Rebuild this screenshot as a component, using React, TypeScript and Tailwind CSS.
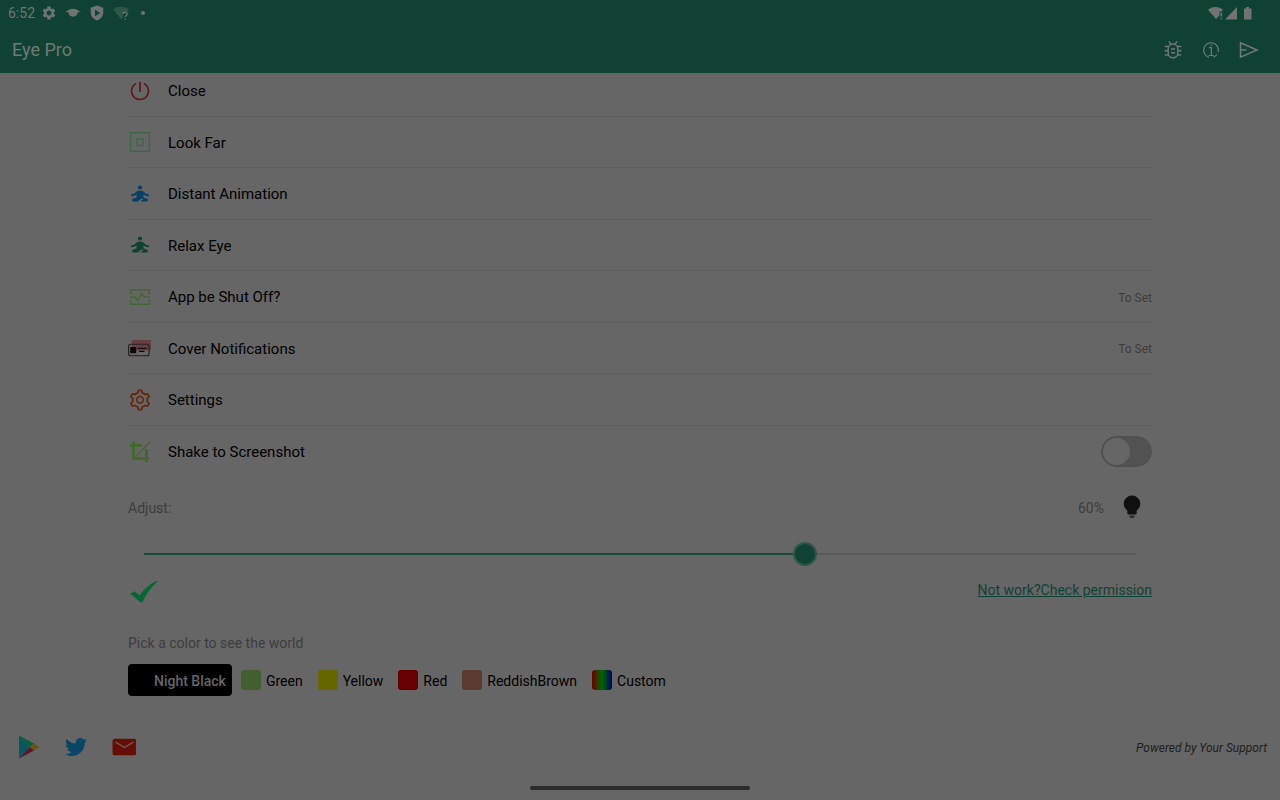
import { useState, type ReactNode } from "react";
import { AiOutlinePoweroff, AiOutlineSetting } from "react-icons/ai";
import { FaTwitter } from "react-icons/fa";
import { MdSettings } from "react-icons/md";

function StatusBar() {
  return (
    <div className="flex h-[26px] items-center justify-between pr-7 pl-2 text-[#6f7472]">
      <div className="flex items-center gap-2">
        <span className="text-sm">6:52</span>
        <MdSettings className="-ml-0.5 size-4" />
        <svg className="h-4 w-4" viewBox="0 0 16 16" fill="currentColor" aria-hidden="true">
          <path d="M0 7C3 5.500 4.500 3.700 8 3.700S13 5.500 16 7l-3.100.3C12.500 10 10.500 11.700 8 11.700S3.500 10 3.200 7.300z" />
        </svg>
        <svg className="h-4 w-4" viewBox="0 0 16 16" fill="currentColor" fillRule="evenodd" aria-hidden="true">
          <path d="M8 0.500l6.300 2.300v5C14.300 11.500 11.500 14.300 8 15.500 4.500 14.300 1.700 11.500 1.700 7.800v-5zM6 4.500v6.800l5.200-3.400z" />
        </svg>
        <svg className="h-4 w-4" viewBox="0 0 16 16" aria-hidden="true">
          <path d="M0 4.300C4.500 1 11.500 1 16 4.300L14 7c-2-.5-4 .8-4 3l-.2 3L8 14z" fill="#30564a" />
          <path d="M10.200 9c0-2.300 4-2.300 4-.1 0 1.500-2 1.500-2 3.200m0 1.400v1.200" fill="none" stroke="currentColor" strokeWidth="1.300" />
        </svg>
        <span className="ml-1 size-1 rounded-full bg-[#6f7472]" />
      </div>
      <svg className="h-4 w-11" viewBox="0 0 44 16" fill="currentColor" aria-hidden="true">
        <path d="M0 4.800C4.200 1.200 10.800 1.200 15 4.800L13.600 6.500H11.500v4L8 14z" />
        <path d="M12.500 7.500h1.500v4h-1.500zM12.500 12.700h1.500v1.500h-1.500zM29 2v12.500H17zM38 2h3v1.500h2.500v11h-7.500v-11H38z" />
      </svg>
    </div>
  );
}

function BugIcon() {
  return (
    <svg className="size-5" viewBox="0 0 20 20" fill="none" stroke="currentColor" strokeWidth="1.400" aria-hidden="true">
      <rect x="5.200" y="4" width="9.600" height="13.800" rx="4.800" />
      <path d="M5.800 1.500l2.300 2.600M14.200 1.500l-2.300 2.600M1.800 6.500h3.800M14.400 6.500h3.800M1.500 10.800h3.700M14.800 10.800h3.700M1.800 15h3.800M14.400 15h3.800M8 9h4M8 12.800h4" />
    </svg>
  );
}

function InfoIcon() {
  return (
    <svg className="size-5" viewBox="0 0 20 20" fill="none" stroke="currentColor" strokeWidth="1.200" aria-hidden="true">
      <path d="M8 17.300A7.400 7.400 0 1 1 17.200 12M15.800 14.500A7.400 7.400 0 0 1 12.300 17.200" />
      <path d="M8 7.700h2.400v7.600M7.600 15.500h5.200M9.500 5.200h1.500" />
    </svg>
  );
}

function SendIcon() {
  return (
    <svg className="size-5" viewBox="0 0 20 20" fill="none" stroke="currentColor" strokeWidth="1.500" aria-hidden="true">
      <path d="M1.500 2.800L18 10 1.500 17.200z" />
      <path d="M1.500 10H7.500" />
    </svg>
  );
}

function MeditationIcon({ className }: { className: string }) {
  return (
    <svg className={`size-6 ${className}`} viewBox="0 0 24 24" fill="currentColor" aria-hidden="true">
      <circle cx="12" cy="5.500" r="2.100" />
      <path d="M10.300 8.700h3.400c2 0 3 3.400 7.300 3.800v1.800c-2.600 0-4.300-.8-5.500-2v3.200l3.700 1.300c1.300.5 1 2.700-.6 2.700h-6.200l3-2.500-2-.4-3.600 2.900H5.400c-1.600 0-1.900-2.200-.6-2.700l3.700-1.300v-3.200c-1.200 1.200-2.900 2-5.500 2v-1.800c4.300-.4 5.300-3.800 7.300-3.800z" />
    </svg>
  );
}

function TargetIcon() {
  return (
    <svg className="size-6" viewBox="0 0 24 24" fill="none" stroke="#3b6844" strokeWidth="1.300" aria-hidden="true">
      <rect x="2.600" y="2.600" width="18.800" height="18.800" />
      <rect x="9" y="9" width="6" height="6.500" />
    </svg>
  );
}

function MonitorIcon() {
  return (
    <svg className="size-6" viewBox="0 0 24 24" fill="none" stroke="#426831" strokeWidth="1.500" aria-hidden="true">
      <path d="M2.700 9.500V4.700h18.600v4.800M2.700 14.500v4.800h18.600v-4.800" strokeLinejoin="round" />
      <path d="M2 12h5.200l2.600 3.500L13.700 8.300 16.300 12H22" />
    </svg>
  );
}

function NoticeIcon() {
  return (
    <svg className="size-6" viewBox="0 0 24 24" fill="none" aria-hidden="true">
      <path d="M4 4h19v10.500H4z" fill="#664040" />
      <rect x="0.600" y="8.200" width="20.500" height="11.500" rx="2" stroke="#242020" strokeWidth="1.100" />
      <path d="M2.200 11h6v6.200h-6z" fill="#0c0505" />
      <path d="M9.800 12.300h9M11 15.400h5.500" stroke="#160909" strokeWidth="1.200" />
    </svg>
  );
}

function CropIcon() {
  return (
    <svg className="size-6" viewBox="0 0 24 24" fill="none" stroke="#42682d" aria-hidden="true">
      <path d="M5.500 1v17.500H21M2 5.300h12M18.500 9v13.500" strokeWidth="2.800" />
      <path d="M8 16.500L22.500 1.500" strokeWidth="1.300" />
    </svg>
  );
}

type Row = { label: string; icon: ReactNode; action?: string };

const rows: Row[] = [
  { label: "Close", icon: <AiOutlinePoweroff className="size-[22px] text-[#651515]" /> },
  { label: "Look Far", icon: <TargetIcon /> },
  { label: "Distant Animation", icon: <MeditationIcon className="text-[#083f64]" /> },
  { label: "Relax Eye", icon: <MeditationIcon className="text-[#104234]" /> },
  { label: "App be Shut Off?", icon: <MonitorIcon />, action: "To Set" },
  { label: "Cover Notifications", icon: <NoticeIcon />, action: "To Set" },
  { label: "Settings", icon: <AiOutlineSetting className="size-6 text-[#662408]" /> },
];

const colors = [
  { name: "Night Black", swatch: "bg-black" },
  { name: "Green", swatch: "bg-[#42602f]" },
  { name: "Yellow", swatch: "bg-[#666600]" },
  { name: "Red", swatch: "bg-[#660000]" },
  { name: "ReddishBrown", swatch: "bg-[#593b31]" },
  { name: "Custom", swatch: "bg-linear-to-r/srgb from-[#660000] via-[#006600] to-[#000066]" },
];

export default function App() {
  const [level, setLevel] = useState(60);
  const [shake, setShake] = useState(false);
  const [color, setColor] = useState("Night Black");

  return (
    <div className="flex min-h-screen flex-col bg-[#666666] font-[Roboto,sans-serif] text-black">
      <header className="relative z-10 bg-[#104234]">
        <StatusBar />
        <div className="flex h-[47px] items-center justify-between pr-[21px] pl-3 text-[#727876]">
          <h1 className="text-lg">Eye Pro</h1>
          <div className="flex items-center gap-[18px]">
            <button type="button" aria-label="Report a bug">
              <BugIcon />
            </button>
            <button type="button" aria-label="About">
              <InfoIcon />
            </button>
            <button type="button" aria-label="Share">
              <SendIcon />
            </button>
          </div>
        </div>
      </header>

      <main className="-mt-2 px-[10%]">
        <ul>
          {rows.map((row) => (
            <li key={row.label} className="border-b border-[#5e5e5e] odd:h-[52px] even:h-[51px]">
              <button type="button" className="flex size-full items-center gap-4 text-left">
                <span className="flex size-6 items-center justify-center">{row.icon}</span>
                <span className="flex-1 pt-0.5 text-[15px]">{row.label}</span>
                {row.action && <span className="pt-0.5 text-xs text-[#3d3d3d]">{row.action}</span>}
              </button>
            </li>
          ))}
          <li className="flex h-[51px] items-center gap-4">
            <CropIcon />
            <label htmlFor="shake" className="flex-1 pt-0.5 text-[15px]">
              Shake to Screenshot
            </label>
            <input
              id="shake"
              type="checkbox"
              checked={shake}
              onChange={(e) => setShake(e.target.checked)}
              className="flex h-[31px] w-[51px] appearance-none items-center rounded-full border border-[#4f4f4f] bg-[#525252] px-px before:size-[27px] before:rounded-full before:bg-[#666666] checked:justify-end checked:bg-[#104234]"
            />
          </li>
        </ul>

        <div className="mt-[18px] flex h-6 items-center text-sm text-[#3d3d3d]">
          <label htmlFor="level" className="flex-1 pt-0.5">
            Adjust:
          </label>
          <output htmlFor="level" className="pt-0.5">
            {level}%
          </output>
          <svg className="mr-2 ml-4 size-6" viewBox="0 0 24 24" fill="#101010" aria-hidden="true">
            <path d="M12 0.500a8.300 8.300 0 0 1 8.300 8.300c0 3.100-1.600 5.200-3.600 6.700v2.500q0 1.500-1.500 1.500H8.800q-1.500 0-1.500-1.500v-2.500c-2-1.500-3.600-3.600-3.600-6.700A8.300 8.300 0 0 1 12 0.500z" />
            <path d="M9.500 20.500h5v.7q0 1.800-1.800 1.800h-1.400q-1.800 0-1.800-1.800z" fill="#2c2c2c" />
          </svg>
        </div>

        <div className="mt-[23px] grid h-6 items-center">
          <div className="col-start-1 row-start-1 mx-4 h-0.5 bg-[#5a5a5a]">
            <div className="h-full bg-[#1b483b]" style={{ width: `${(level / 90) * 100}%` }} />
          </div>
          <input
            id="level"
            type="range"
            min={0}
            max={90}
            value={level}
            onChange={(e) => setLevel(Number(e.target.value))}
            className="col-start-1 row-start-1 mx-1 h-6 appearance-none bg-transparent [&::-webkit-slider-thumb]:size-6 [&::-webkit-slider-thumb]:appearance-none [&::-webkit-slider-thumb]:rounded-full [&::-webkit-slider-thumb]:border-2 [&::-webkit-slider-thumb]:border-[#30554a] [&::-webkit-slider-thumb]:bg-[#104234]"
          />
        </div>

        <div className="mt-2 flex h-8 items-center justify-between">
          <svg className="size-8" viewBox="0 0 32 32" aria-hidden="true">
            <path d="M2.300 19.700l4.200-2.500 5 4.200C16.500 15 22.500 9.100 29.300 6.800l.3.700C23.500 12.500 18.500 19.500 14.600 27.800l-1.500 1z" fill="#086632" />
          </svg>
          <a href="#permission" className="text-sm text-[#104234] underline">
            Not work?Check permission
          </a>
        </div>

        <fieldset className="mt-[27px]">
          <legend className="text-sm text-[#3d3d3d]">Pick a color to see the world</legend>
          <div className="mt-[11px] flex gap-2">
            {colors.map((c) => (
              <label
                key={c.name}
                className="flex h-8 items-center gap-[5px] rounded pr-1.5 pl-px text-sm has-checked:bg-black has-checked:font-medium has-checked:text-[#666666]"
              >
                <input
                  type="radio"
                  name="color"
                  checked={color === c.name}
                  onChange={() => setColor(c.name)}
                  className={`size-5 appearance-none rounded-[3px] ${c.swatch}`}
                />
                <span className="pt-0.5">{c.name}</span>
              </label>
            ))}
          </div>
        </fieldset>
      </main>

      <footer className="mt-auto">
        <div className="flex h-12 items-center justify-between pr-[13px] pl-4">
          <div className="flex items-center gap-6">
            <a href="#play" aria-label="Play Store">
              <svg className="size-6" viewBox="0 0 24 24" aria-hidden="true">
                <path d="M3 .5v23L14 12z" fill="#085660" />
                <path d="M3 .5l15 8L14 12z" fill="#08603b" />
                <path d="M3 23.500l15-8L14 12z" fill="#651127" />
                <path d="M18 8.500l5.300 3.500-5.300 3.500-4-3.500z" fill="#665411" />
              </svg>
            </a>
            <a href="#twitter" aria-label="Twitter">
              <FaTwitter className="size-6 px-px text-[#084567]" />
            </a>
            <a href="#mail" aria-label="Email">
              <svg className="size-6" viewBox="0 0 24 24" aria-hidden="true">
                <rect x="0.500" y="3.700" width="24" height="16.600" rx="2.500" fill="#660d05" />
                <path d="M3.500 7l9 5.500L21.500 7" fill="none" stroke="#666666" strokeWidth="1.300" />
              </svg>
            </a>
          </div>
          <p className="pt-0.5 text-xs text-[#202020] italic">Powered by Your Support</p>
        </div>
        <div className="flex h-[29px] items-center justify-center pt-3 pb-2">
          <span className="h-1 w-55 rounded-full bg-[#2b2b2b]" />
        </div>
      </footer>
    </div>
  );
}
